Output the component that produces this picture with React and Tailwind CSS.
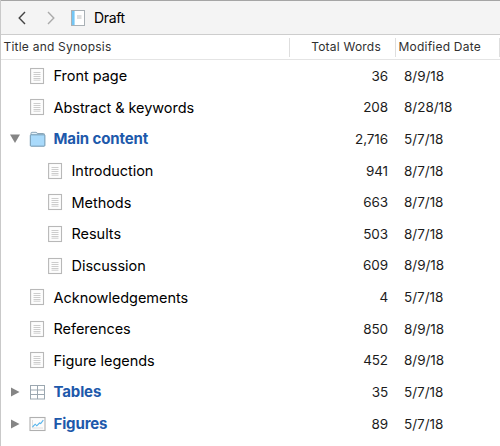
const rows = [
  { title: 'Front page', words: '36', date: '8/9/18', icon: 'page' },
  { title: 'Abstract & keywords', words: '208', date: '8/28/18', icon: 'page' },
  { title: 'Main content', words: '2,716', date: '5/7/18', icon: 'folder', group: 'open' },
  { title: 'Introduction', words: '941', date: '8/7/18', icon: 'page', nested: true },
  { title: 'Methods', words: '663', date: '8/7/18', icon: 'page', nested: true },
  { title: 'Results', words: '503', date: '8/7/18', icon: 'page', nested: true },
  { title: 'Discussion', words: '609', date: '8/9/18', icon: 'page', nested: true },
  { title: 'Acknowledgements', words: '4', date: '5/7/18', icon: 'page' },
  { title: 'References', words: '850', date: '8/9/18', icon: 'page' },
  { title: 'Figure legends', words: '452', date: '8/9/18', icon: 'page' },
  { title: 'Tables', words: '35', date: '5/7/18', icon: 'table', group: 'closed' },
  { title: 'Figures', words: '89', date: '5/7/18', icon: 'chart', group: 'closed' },
];

function Icon({ name }) {
  return (
    <svg width="18" height="18" viewBox="0 0 18 18" fill="none" className="shrink-0">
      {name === 'page' && (
        <>
          <rect x="1.6" y="1.5" width="12.9" height="15" fill="#fdfdfd" stroke="#b8b8b8" strokeWidth="1.1" />
          <path d="M4.5 5.5h7M4.5 7.5h7M4.5 9.5h7M4.5 11.5h7M4.5 13.2h7" stroke="#cdcdcd" />
        </>
      )}
      {name === 'folder' && (
        <>
          <path d="M2 5V3.2Q2 2.3 3 2.3H7Q8 2.3 8.2 3.5H14.5Q15.5 3.5 15.5 4.6V5" fill="#e3f2fb" stroke="#8aa6b8" />
          <rect x="1.3" y="4.8" width="14.6" height="11.4" rx="0.8" fill="#a9dafb" stroke="#7196ae" />
        </>
      )}
      {name === 'table' && (
        <>
          <rect x="1.5" y="2.5" width="14" height="13.5" fill="#fff" stroke="#9ba7b0" />
          <path d="M1.5 7h14M1.5 11.5h14M8.5 2.5V16" stroke="#9ba7b0" />
        </>
      )}
      {name === 'chart' && (
        <>
          <rect x="1" y="2.5" width="15" height="13" fill="#fcfcfc" stroke="#b0b0b0" strokeWidth="1.1" />
          <path d="M3.5 5v8h10.5" stroke="#d8d8d8" strokeWidth="0.8" />
          <path d="M3.5 12L6.2 9.2l1.6 1.6L10.5 8l1.2.6L14.3 5.2" stroke="#58b5ec" strokeWidth="1.1" />
        </>
      )}
    </svg>
  );
}

function Disclosure({ state }) {
  return (
    <svg width="12" height="12" viewBox="0 0 12 12" fill="#858585" className="shrink-0">
      {state === 'open' && <path d="M1 1.5h10L6 10z" />}
      {state === 'closed' && <path d="M2 1.5v9L10.5 6z" />}
    </svg>
  );
}

function Toolbar() {
  return (
    <div className="flex h-[35px] items-center border-t border-b border-t-[#a5a5a5] border-b-[#cdcdcd] bg-[#f4f4f4]">
      <svg width="8" height="14" viewBox="0 0 8 14" fill="none" stroke="#444" strokeWidth="1.4" className="ml-[16.5px]">
        <path d="M7 1L1.2 7L7 13" />
      </svg>
      <svg width="8" height="14" viewBox="0 0 8 14" fill="none" stroke="#aaa" strokeWidth="1.4" className="ml-[21.5px]">
        <path d="M1 1L6.8 7L1 13" />
      </svg>
      <svg width="14" height="16" viewBox="0 0 14 16" fill="none" className="ml-[16px]">
        <rect x="0.5" y="0.5" width="13" height="15" fill="#fff" stroke="#a9b0b5" />
        <path d="M1 1h2.6v14H1z" fill="#73c6f5" />
        <path d="M6 6h4.5M6 8h4.5" stroke="#bdbdbd" />
      </svg>
      <span className="ml-[9px] text-[14px] tracking-[-0.35px]">Draft</span>
    </div>
  );
}

function Row({ row }) {
  return (
    <div className="flex h-[31.63px] items-center">
      <div className={row.nested ? 'w-[46px] shrink-0 pl-[8px]' : 'w-[28px] shrink-0 pl-[8px]'}>
        <Disclosure state={row.group} />
      </div>
      <Icon name={row.icon} />
      <span
        className={
          row.group
            ? 'ml-[6.5px] flex-1 pt-px text-[15px] font-bold tracking-[-0.13px] text-[#1d59ab]'
            : 'ml-[6.5px] flex-1 pt-[0.5px] text-[14.5px] tracking-[-0.04px]'
        }
      >
        {row.title}
      </span>
      <span className="w-[90px] text-right text-[13.5px] tracking-[-0.1px] text-[#1c1c1c]">{row.words}</span>
      <span className="ml-[16px] w-[96px] text-[13.5px] tracking-[-0.02px] text-[#1c1c1c]">{row.date}</span>
    </div>
  );
}

export default function App() {
  return (
    <div className="h-[446px] w-[500px] overflow-hidden border-l border-[#c9c9c9] bg-white font-['Inter',sans-serif] text-black">
      <Toolbar />
      <div className="flex h-[25px] items-center border-b border-[#e4e4e4] text-[12px] tracking-[0.22px] text-[#303030]">
        <span className="w-[288px] pb-[2px] pl-[2.5px] leading-[19px]">Title and Synopsis</span>
        <span className="h-[19px] w-[107px] border-x border-[#dedede] pr-[14px] text-right leading-[17px]">Total Words</span>
        <span className="h-[19px] w-[104px] border-r border-[#dedede] pl-[2.5px] leading-[17px]">Modified Date</span>
      </div>
      {rows.map((row) => (
        <Row key={row.title} row={row} />
      ))}
    </div>
  );
}
